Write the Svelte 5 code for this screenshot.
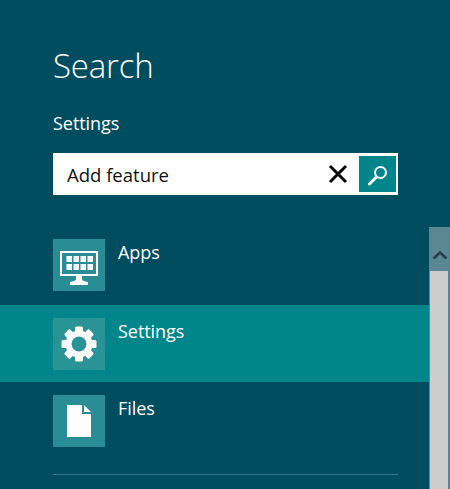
<script lang="ts">
	const results = [
		{ label: 'Apps', icon: 'apps', selected: false },
		{ label: 'Settings', icon: 'gear', selected: true },
		{ label: 'Files', icon: 'file', selected: false }
	];
	const teeth = [0, 45, 90, 135, 180, 225, 270, 315];
</script>

<div class="pane">
	<main>
		<h1>Search</h1>
		<p class="scope">Settings</p>

		<div class="search">
			<span class="query">Add feature</span>
			<svg class="clear" viewBox="0 0 20 20" width="20" height="20">
				<path d="M2 2 L18 18 M18 2 L2 18" stroke="#000" stroke-width="3" fill="none" />
			</svg>
			<button aria-label="Search">
				<svg viewBox="0 0 24 24" width="24" height="24">
					<circle cx="14.5" cy="10.5" r="5.5" stroke="#fff" stroke-width="2" fill="none" />
					<path d="M10 15.5 L3.5 22" stroke="#fff" stroke-width="3" stroke-linecap="round" />
				</svg>
			</button>
		</div>

		<ul>
			{#each results as item}
				<li class:selected={item.selected}>
					<div class="tile">
						{#if item.icon === 'apps'}
							<svg class="monitor" viewBox="0 0 40 36" width="40" height="36">
								<rect x="2" y="2" width="36" height="23" fill="none" stroke="#fff" stroke-width="2" />
								{#each [7.5, 14.5, 21.5, 28.5] as x}
									{#each [6, 14] as y}
										<rect {x} {y} width="5.5" height="6" fill="#fff" />
									{/each}
								{/each}
								<path d="M17 26 H23 V29 C23 31 26 31 29 32 V35 H11 V32 C14 31 17 31 17 29 Z" fill="#fff" />
							</svg>
						{:else if item.icon === 'gear'}
							<svg viewBox="0 0 36 36" width="36" height="36">
								{#each teeth as angle}
									<rect x="14" y="0.5" width="8" height="8" rx="1.5" fill="#fff" transform="rotate({angle} 18 18)" />
								{/each}
								<circle cx="18" cy="18" r="10.5" fill="none" stroke="#fff" stroke-width="6" />
							</svg>
						{:else}
							<svg viewBox="0 0 24 32" width="24" height="32">
								<path d="M0 0 H15 V9 H24 V32 H0 Z" fill="#fff" />
								<path d="M17 0 L24 7 H17 Z" fill="#fff" />
							</svg>
						{/if}
					</div>
					<span class="label">{item.label}</span>
				</li>
			{/each}
		</ul>

		<hr />
	</main>

	<aside class="scrollbar">
		<div class="up">
			<svg viewBox="0 0 16 10" width="16" height="10">
				<path d="M1.5 8.5 L8 2.5 L14.5 8.5" stroke="#26404a" stroke-width="2.6" fill="none" />
			</svg>
		</div>
		<div class="thumb"></div>
	</aside>
</div>

<style>
	:global(body) {
		margin: 0;
		background: #004d60;
		overflow: hidden;
	}
	.pane {
		display: flex;
		width: 450px;
		height: 489px;
		overflow: hidden;
		background: #004d60;
		color: #fff;
		font-family: 'Open Sans', 'Noto Sans', sans-serif;
	}
	main {
		width: 429px;
		flex: none;
	}
	h1 {
		margin: 0;
		padding: 43px 0 0 53px;
		font-size: 33px;
		font-weight: 300;
		line-height: 46px;
		letter-spacing: -0.2px;
	}
	.scope {
		margin: 0;
		padding: 22px 0 0 53px;
		font-size: 18px;
		line-height: 24px;
		letter-spacing: -0.05px;
	}
	.search {
		display: flex;
		align-items: center;
		box-sizing: border-box;
		width: 345px;
		height: 42px;
		margin: 18px 0 0 53px;
		padding: 0 2px 0 14px;
		background: #fff;
	}
	.query {
		flex: 1;
		color: #111;
		font-size: 18.5px;
	}
	.clear {
		margin-right: 11px;
	}
	button {
		display: flex;
		align-items: center;
		justify-content: center;
		width: 37px;
		height: 36px;
		padding: 0;
		border: none;
		background: #00858a;
	}
	ul {
		margin: 32px 0 0;
		padding: 0;
		list-style: none;
	}
	li {
		display: flex;
		align-items: flex-start;
		height: 78px;
		box-sizing: border-box;
		padding: 12px 0 0 53px;
		gap: 13px;
	}
	li.selected {
		height: 77px;
		background: #00858a;
		padding-top: 13px;
	}
	li:last-child {
		padding-top: 13px;
	}
	.tile {
		display: flex;
		align-items: center;
		justify-content: center;
		flex: none;
		width: 52px;
		height: 52px;
		background: #2a8c94;
	}
	li.selected .tile {
		background: #299396;
	}
	.monitor {
		margin-top: 6px;
	}
	.label {
		font-size: 18px;
		line-height: 26px;
		letter-spacing: -0.05px;
	}
	hr {
		width: 345px;
		height: 1px;
		margin: 14px 0 0 53px;
		border: none;
		background: #35798a;
	}
	.scrollbar {
		display: flex;
		flex-direction: column;
		flex: 1;
		margin-top: 227px;
		background: #5b8793;
	}
	.up {
		display: flex;
		align-items: center;
		justify-content: center;
		box-sizing: border-box;
		height: 44px;
		padding-top: 12px;
		flex: none;
	}
	.thumb {
		flex: 1;
		margin: 0 2px 0 1px;
		background: #cdcdcd;
	}
</style>
